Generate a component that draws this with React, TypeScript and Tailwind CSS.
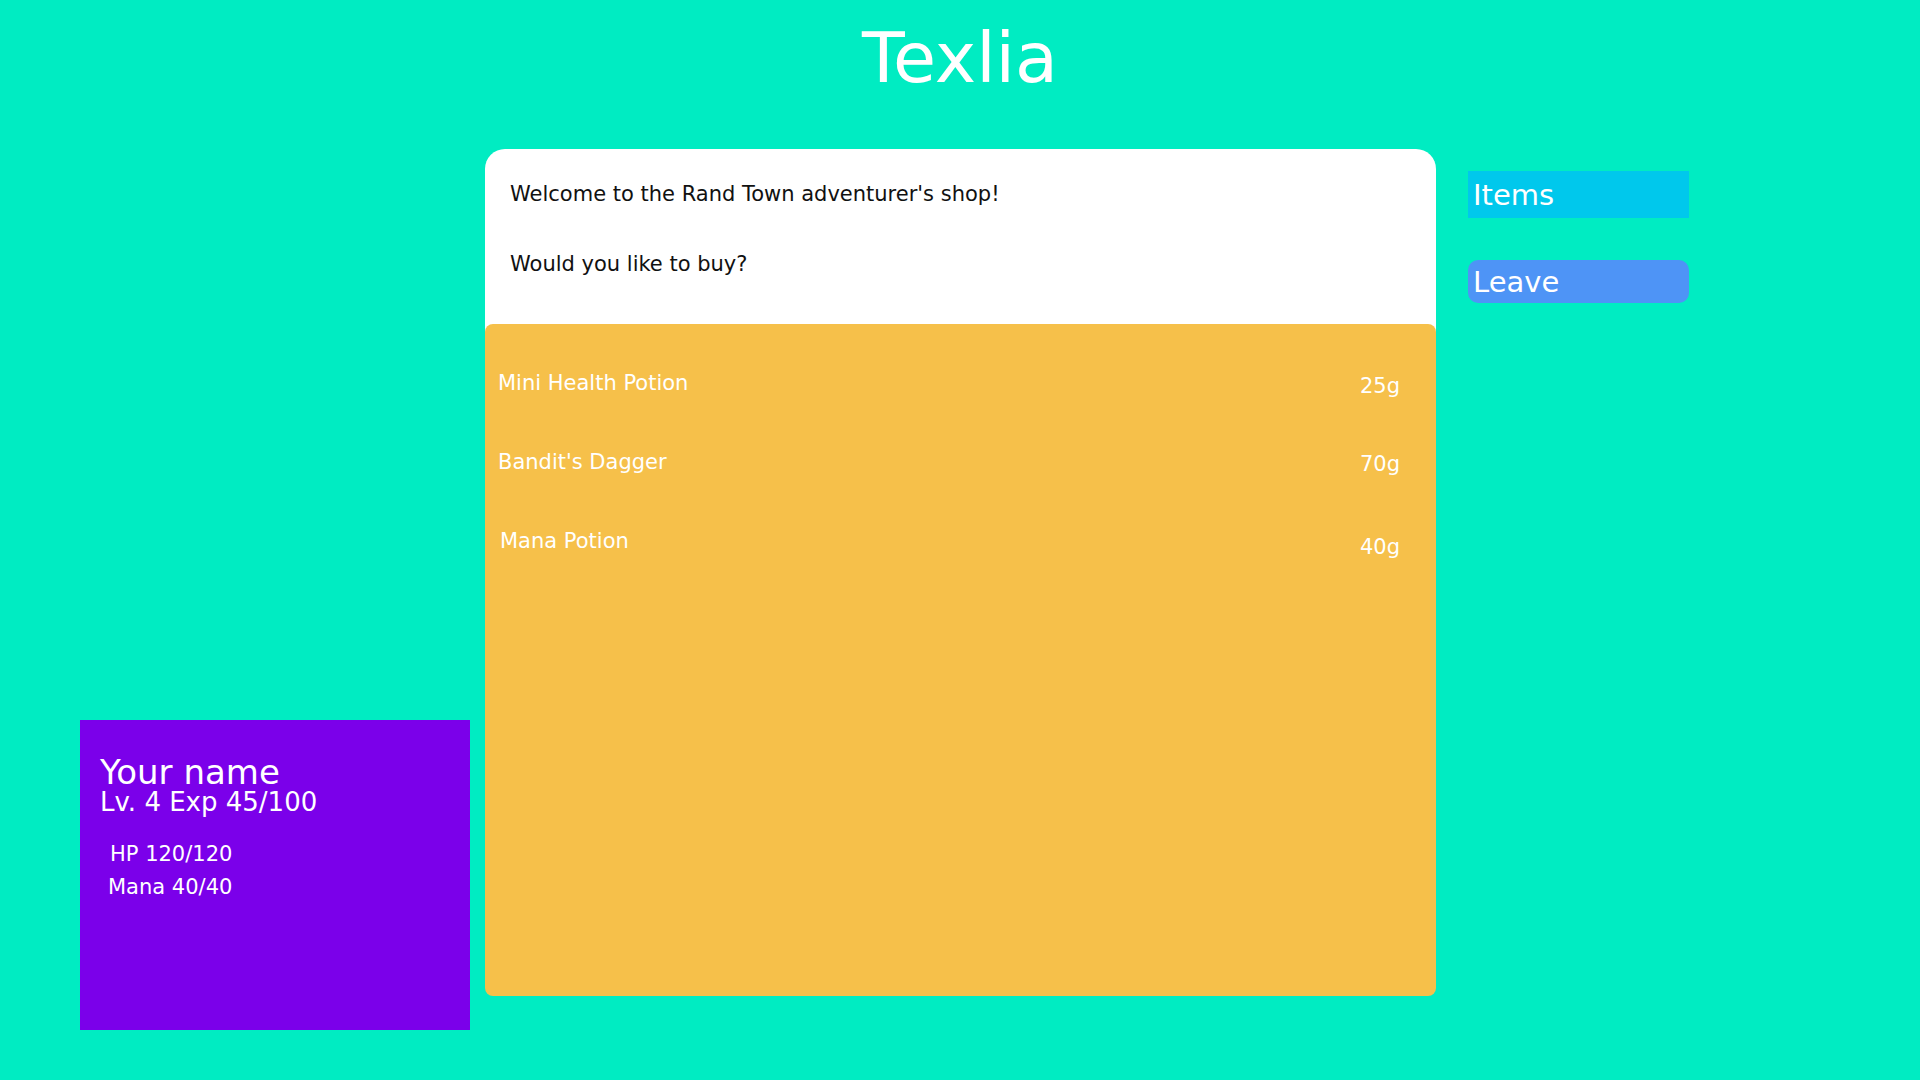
const items = [
  { name: "Mini Health Potion", price: "25g", shift: "mt-[3px]" },
  { name: "Bandit's Dagger", price: "70g", shift: "mt-[2px]" },
  { name: "Mana Potion", price: "40g", shift: "mt-[6px]" },
];

export default function App() {
  return (
    <div className="min-h-screen w-full bg-[#00ECC2] font-['DejaVu_Sans',sans-serif] text-white">
      <div className="h-[149px] pt-[23px]">
        <h1 className="text-center text-[70px] leading-none">Texlia</h1>
      </div>

      <div className="flex items-start">
        {/* player card */}
        <div className="ml-[80px] mt-[571px] h-[310px] w-[390px] shrink-0 bg-[#7B00EA] pl-[20px] pt-[35px]">
          <p className="text-[34px] leading-none">Your name</p>
          <p className="text-[26px] leading-none">Lv. 4 Exp 45/100</p>
          <div className="mt-[29px] space-y-[12px] pl-[10px] text-[21px] leading-none">
            <p>HP 120/120</p>
            <p className="-ml-[2px]">Mana 40/40</p>
          </div>
        </div>

        {/* shop */}
        <div className="ml-[15px] w-[951px] shrink-0 text-[21px] leading-[24px]">
          <div className="h-[183px] rounded-t-[20px] bg-white px-[25px] pt-[33px] text-[#111]">
            <p>Welcome to the Rand Town adventurer's shop!</p>
            <p className="mt-[46px]">Would you like to buy?</p>
          </div>
          <div className="relative -mt-[8px] h-[672px] rounded-lg bg-[#F6C04A] pt-[47px] pl-[13px] pr-[36px]">
            {items.map((item, i) => (
              <div key={item.name} className="flex h-[79px] items-start justify-between">
                <span className={i === 2 ? "ml-[2px]" : ""}>{item.name}</span>
                <span className={item.shift}>{item.price}</span>
              </div>
            ))}
          </div>
        </div>

        {/* actions */}
        <div className="ml-[32px] mt-[22px] flex w-[221px] flex-col gap-[42px]">
          <button className="h-[47px] bg-[#00C8EC] pl-[5px] pt-[2px] text-left text-[29px] leading-none">Items</button>
          <button className="h-[43px] rounded-[10px] bg-[#4E94F6] pl-[5px] pt-[2px] text-left text-[29px] leading-none">Leave</button>
        </div>
      </div>
    </div>
  );
}
